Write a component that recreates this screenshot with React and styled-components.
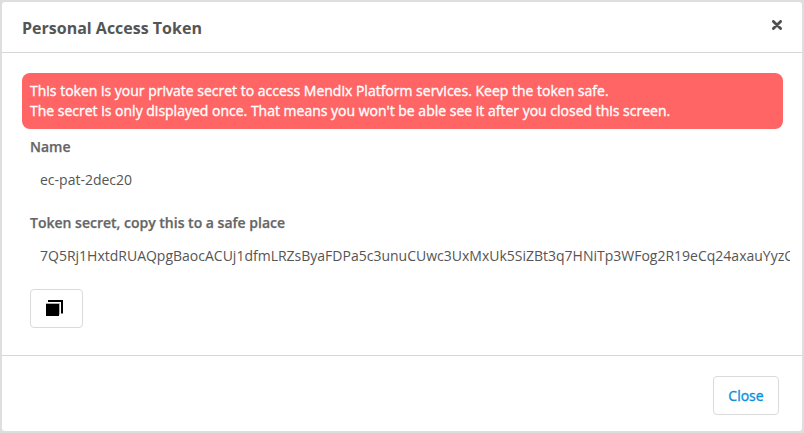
import React from "react";
import styled, { createGlobalStyle } from "styled-components";

const GlobalStyle = createGlobalStyle`
  *, *::before, *::after { box-sizing: border-box; }
  body {
    margin: 0;
    background: #dedede;
    font-family: "Open Sans", sans-serif;
    font-size: 14px;
    line-height: 20px;
    color: #555;
  }
`;

const Dialog = styled.section`
  display: flex;
  flex-direction: column;
  height: 433px;
  border: 2px solid #dedede;
  border-radius: 5px;
  background: #fff;
  overflow: hidden;
`;

const Header = styled.header`
  display: flex;
  align-items: center;
  justify-content: space-between;
  height: 51px;
  padding: 2px 20px 0;
  border-bottom: 1px solid #d7d7d7;
`;

const Title = styled.h4`
  margin: 0;
  font-size: 16px;
  font-weight: 700;
  line-height: 22px;
`;

const DismissButton = styled.button`
  display: flex;
  margin: 0 0 7px;
  padding: 0;
  border: 0;
  background: none;
`;

const Body = styled.div`
  flex: 1;
  padding: 20px 12px 0 20px;
`;

const Alert = styled.div`
  width: 761px;
  height: 56px;
  padding: 8px;
  border-radius: 8px;
  background: #ff6565;
  color: #fff;
  -webkit-text-stroke: 0.35px #fff;
  white-space: nowrap;
`;

const Field = styled.div`
  display: flex;
  flex-direction: column;
  height: 76px;
  padding: 8px 0 0 8px;
`;

const Label = styled.span`
  font-weight: 600;
  color: #666;
  -webkit-text-stroke: 0.25px #666;
`;

const Value = styled.span`
  margin: 13px 0 0 10px;
  overflow: hidden;
  white-space: nowrap;
`;

const Button = styled.button`
  display: flex;
  align-items: center;
  justify-content: center;
  width: ${({ $width }) => $width}px;
  height: 39px;
  padding: 0;
  border: 1px solid #dadada;
  border-radius: 4px;
  background: #fff;
  color: #0a90d8;
  font: 400 14px/20px "Open Sans", sans-serif;
  -webkit-text-stroke: 0.35px #0a90d8;
`;

const CopyRow = styled.div`
  display: flex;
  padding: 8px 0 0 8px;
`;

const CopyIcon = styled.svg`
  margin-right: 5px;
`;

const Footer = styled.footer`
  display: flex;
  justify-content: flex-end;
  height: 76px;
  padding: 20px 23px 0;
  border-top: 1px solid #d7d7d7;
`;

export default function App() {
  return (
    <>
      <GlobalStyle />
      <Dialog role="dialog">
        <Header>
          <Title>Personal Access Token</Title>
          <DismissButton aria-label="Dismiss">
            <svg width="10" height="10" viewBox="0 0 10 10">
              <path d="M1.4 1.4 8.6 8.6M8.6 1.4 1.4 8.6" stroke="#505050" strokeWidth="2.8" strokeLinecap="round" />
            </svg>
          </DismissButton>
        </Header>
        <Body>
          <Alert>
            This token is your private secret to access Mendix Platform services. Keep the token safe.
            <br />
            The secret is only displayed once. That means you won't be able see it after you closed this screen.
          </Alert>
          <Field>
            <Label>Name</Label>
            <Value>ec-pat-2dec20</Value>
          </Field>
          <Field>
            <Label>Token secret, copy this to a safe place</Label>
            <Value>7Q5Rj1HxtdRUAQpgBaocACUj1dfmLRZsByaFDPa5c3unuCUwc3UxMxUk5SiZBt3q7HNiTp3WFog2R19eCq24axauYyzQ</Value>
          </Field>
          <CopyRow>
            <Button $width={53} aria-label="Copy">
              <CopyIcon width="18" height="17" viewBox="0 0 18 17">
                <path d="M3 0H18V13.5H16V2H3Z" fill="#000" />
                <path d="M1 3.5H14.5V14.5" fill="none" stroke="#a8b0b0" />
                <path d="M1 4H14V16H1Z" fill="#000" />
              </CopyIcon>
            </Button>
          </CopyRow>
        </Body>
        <Footer>
          <Button $width={66}>Close</Button>
        </Footer>
      </Dialog>
    </>
  );
}
